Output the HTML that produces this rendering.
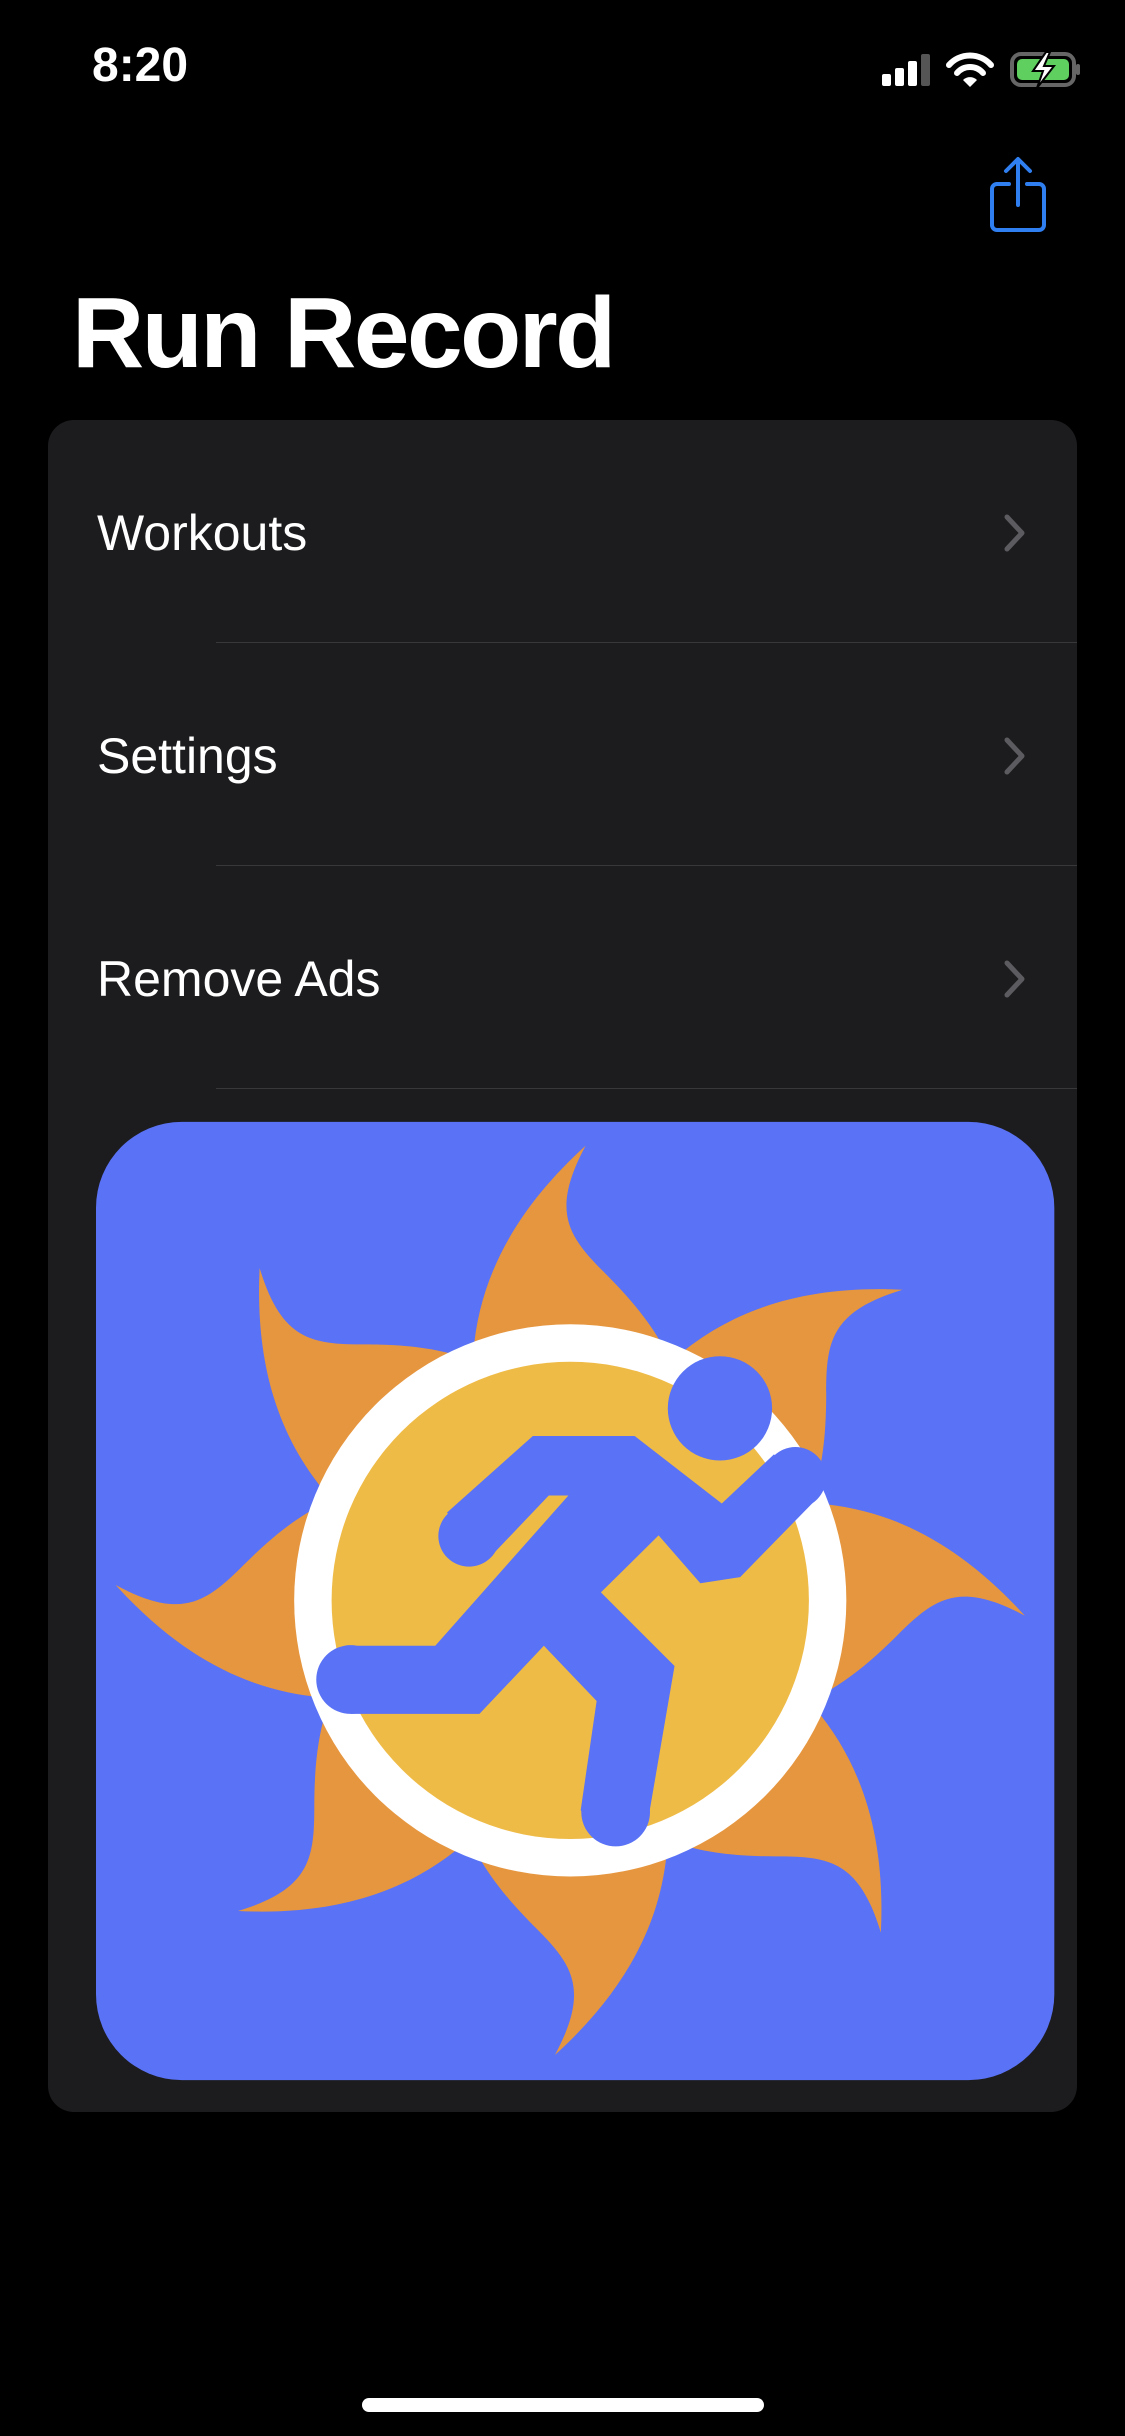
<!DOCTYPE html>
<html><head><meta charset="utf-8"><style>
html,body{margin:0;padding:0;background:#000;}
body{width:1125px;height:2436px;position:relative;overflow:hidden;font-family:"Liberation Sans",sans-serif;color:#fff;}
.abs{position:absolute;}
.time{left:92px;top:38px;font-size:48px;font-weight:bold;letter-spacing:0px;}
.title{left:72px;top:276px;font-size:100px;font-weight:bold;letter-spacing:-2.5px;}
.card{left:48px;top:420px;width:1029px;height:1692px;background:#1c1c1e;border-radius:26px;}
.row{position:absolute;left:0;width:1029px;height:223px;}
.row span{position:absolute;left:49px;top:84px;font-size:50px;}
.sep{position:absolute;left:168px;right:0;height:1px;background:#38383a;}
.chev{position:absolute;left:955px;top:93px;}
.home{left:362px;top:2398px;width:402px;height:14px;background:#fff;border-radius:7px;}
</style></head><body>
<div class="abs time">8:20</div>
<svg class="abs" style="left:880px;top:50px" width="205" height="40" viewBox="0 0 205 40">
<rect x="2" y="24" width="9" height="12" rx="2" fill="#fff"/>
<rect x="15" y="18" width="9" height="18" rx="2" fill="#fff"/>
<rect x="28" y="11" width="9" height="25" rx="2" fill="#fff"/>
<rect x="41" y="4" width="9" height="32" rx="2" fill="#555"/>
<path d="M69 15 A28 28 0 0 1 111 15" stroke="#fff" stroke-width="6" fill="none" stroke-linecap="round"/>
<path d="M77 23 A17 17 0 0 1 103 23" stroke="#fff" stroke-width="6" fill="none" stroke-linecap="round"/>
<path d="M83 30 L90 37 L97 30 A10 10 0 0 0 83 30Z" fill="#fff"/>
<rect x="132" y="4" width="62" height="31" rx="9" fill="none" stroke="#666" stroke-width="4"/>
<rect x="196" y="14" width="4" height="11" rx="2" fill="#666"/>
<rect x="137" y="9" width="52" height="21" rx="5" fill="#5fcf5f"/>
<path d="M166 2 L153 21 L163 21 L157 38 L174 16 L164 16 L170 2Z" fill="#fff" stroke="#000" stroke-width="2"/>
</svg>
<svg class="abs" style="left:985px;top:155px" width="66" height="82" viewBox="0 0 66 82">
<path d="M33 5 V50 M21 16 L33 4 L45 16" stroke="#2f7ff0" stroke-width="4" fill="none" stroke-linecap="round" stroke-linejoin="round"/>
<path d="M24 29 H12 a5 5 0 0 0 -5 5 V70 a5 5 0 0 0 5 5 H54 a5 5 0 0 0 5 -5 V34 a5 5 0 0 0 -5 -5 H42" stroke="#2f7ff0" stroke-width="4" fill="none" stroke-linecap="round"/>
</svg>
<div class="abs title">Run Record</div>
<div class="abs card">
 <div class="row" style="top:0"><span>Workouts</span><svg class="chev" width="24" height="40" viewBox="0 0 24 40"><path d="M4 4 L19 20 L4 36" stroke="#5c5c60" stroke-width="5" fill="none" stroke-linecap="round" stroke-linejoin="round"/></svg></div>
 <div class="sep" style="top:222px"></div>
 <div class="row" style="top:223px"><span>Settings</span><svg class="chev" width="24" height="40" viewBox="0 0 24 40"><path d="M4 4 L19 20 L4 36" stroke="#5c5c60" stroke-width="5" fill="none" stroke-linecap="round" stroke-linejoin="round"/></svg></div>
 <div class="sep" style="top:445px"></div>
 <div class="row" style="top:446px"><span>Remove Ads</span><svg class="chev" width="24" height="40" viewBox="0 0 24 40"><path d="M4 4 L19 20 L4 36" stroke="#5c5c60" stroke-width="5" fill="none" stroke-linecap="round" stroke-linejoin="round"/></svg></div>
 <div class="sep" style="top:668px"></div>
</div>
<svg class="abs" style="left:96px;top:1120px" width="962" height="962" viewBox="0 0 1568 1568">
<rect x="0" y="3" width="1562" height="1562" rx="140" fill="#5a72f5"/>
<g fill="#e6963f">
<path id="ray" d="M798 42 C740 150,770 190,830 250 C880 300,910 340,930 380 L615 380 C625 250,690 140,798 42 Z"/>
<use href="#ray" transform="rotate(45 773 783)"/>
<use href="#ray" transform="rotate(90 773 783)"/>
<use href="#ray" transform="rotate(135 773 783)"/>
<use href="#ray" transform="rotate(180 773 783)"/>
<use href="#ray" transform="rotate(225 773 783)"/>
<use href="#ray" transform="rotate(270 773 783)"/>
<use href="#ray" transform="rotate(315 773 783)"/>
</g>
<circle cx="773" cy="783" r="450" fill="#fff"/>
<circle cx="773" cy="783" r="389" fill="#efbb47"/>
<g fill="#5a72f5">
<circle cx="1017" cy="470" r="85"/>
<path d="M712 515 L878 515 L1020 625 L1105 545 L1180 612 L1050 745 L985 755 L917 677 L823 770 L943 890 L900 1140 L847 1183 L790 1125 L816 947 L730 857 L625 968 L415 968 L415 857 L553 857 L770 612 L738 612 L640 715 L572 640 Z"/>
<circle cx="608" cy="678" r="50"/>
<circle cx="1140" cy="583" r="50"/>
<circle cx="415" cy="912" r="56"/>
<circle cx="847" cy="1128" r="56"/>
</g>
</svg>
<div class="abs home"></div>
</body></html>
